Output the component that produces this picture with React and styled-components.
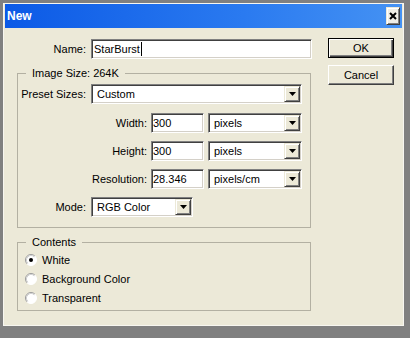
import React from 'react';
import styled, { createGlobalStyle, css } from 'styled-components';

const Global = createGlobalStyle`
  html, body { margin: 0; padding: 0; background: #808080; }
  body {
    width: 410px; height: 338px; overflow: hidden;
    font-family: "Liberation Sans", Arial, sans-serif;
    font-size: 11px; color: #000;
  }
  * { box-sizing: border-box; }
`;

const sunken = css`
  background: #fff;
  border: 1px solid;
  border-color: #808080 #fff #fff #808080;
  box-shadow: inset 1px 1px #404040, inset -1px -1px #d4d0c8;
`;

const raised = css`
  background: #ece9d8;
  border: 1px solid;
  border-color: #ece9d8 #404040 #404040 #ece9d8;
  box-shadow: inset 1px 1px #fff, inset -1px -1px #808080;
`;

const Desktop = styled.div`
  width: 410px;
  height: 338px;
  padding: 3px 0 0 3px;
  background: #808080;
`;

const Window = styled.div`
  width: 401px;
  height: 323px;
  background: #ece9d8;
  border: 1px solid #f7f6f0;
  padding: 0 1px 1px 1px;
  display: flex;
  flex-direction: column;
`;

const TitleBar = styled.div`
  height: 24px;
  flex: none;
  display: flex;
  align-items: center;
  justify-content: space-between;
  padding: 0 2px 0 2px;
  background: linear-gradient(to right, #0c5ae6 0%, #2a7af0 60%, #4592f3 100%);
`;

const Title = styled.span`
  color: #fff;
  font-weight: bold;
  font-size: 12px;
  letter-spacing: 0;
`;

const CloseButton = styled.div`
  ${raised};
  background: #f1efe6;
  width: 14px;
  height: 18px;
  display: flex;
  align-items: center;
  justify-content: center;
`;

const Body = styled.div`
  flex: 1;
  display: flex;
  gap: 16px;
  padding: 10px 8px 0 12px;
`;

const LeftCol = styled.div`
  width: 295px;
  padding-top: 1px;
  display: flex;
  flex-direction: column;
`;

const ButtonCol = styled.div`
  width: 66px;
  display: flex;
  flex-direction: column;
  gap: 7px;
`;

const PushButton = styled.div`
  width: 66px;
  height: 20px;
  display: flex;
  align-items: center;
  justify-content: center;
  background: #ece9d8;
  border: 1px solid;
  ${p => p.$default ? css`
    border-color: #000;
    box-shadow: inset 1px 1px #fff, inset -1px -1px #404040, inset -2px -2px #808080;
  ` : css`
    border-color: #fff #404040 #404040 #fff;
    box-shadow: inset -1px -1px #808080;
  `}
`;

const Row = styled.div`
  display: flex;
  align-items: center;
  height: 20px;
  gap: ${p => p.$gap ?? 5}px;
  margin-top: ${p => p.$mt ?? 0}px;
`;

const Label = styled.span`
  width: ${p => p.$w}px;
  text-align: right;
  white-space: nowrap;
`;

const TextBox = styled.div`
  ${sunken};
  width: ${p => p.$w}px;
  height: 20px;
  display: flex;
  align-items: center;
  padding-left: ${p => p.$pl ?? 1}px;
  white-space: nowrap;
`;

const Caret = styled.span`
  display: inline-block;
  width: 1px;
  height: 14px;
  background: #000;
  margin-left: 1px;
`;

const Select = styled.div`
  ${sunken};
  width: ${p => p.$w}px;
  height: 20px;
  display: flex;
  align-items: center;
  padding: 1px;
`;

const SelectText = styled.span`
  flex: 1;
  padding-left: 4px;
  white-space: nowrap;
`;

const ArrowButton = styled.div`
  ${raised};
  width: 16px;
  height: 16px;
  display: flex;
  align-items: center;
  justify-content: center;
`;

const Group = styled.fieldset`
  margin: ${p => p.$mt}px 0 0 0;
  padding: ${p => p.$pt}px 0 ${p => p.$pb}px 0;
  width: 294px;
  min-width: 0;
  border: 1px solid #b3b0a2;
  display: flex;
  flex-direction: column;
`;

const Legend = styled.legend`
  margin-left: 8px;
  padding: 0 6px;
  line-height: 13px;
  font-size: 11px;
`;

const RadioRow = styled.div`
  height: 19px;
  display: flex;
  align-items: center;
  gap: 5px;
  padding-left: 7px;
`;

const Arrow = () => (
  <svg width="7" height="4" viewBox="0 0 7 4">
    <polygon points="0,0 7,0 3.5,4" fill="#000" />
  </svg>
);

const Dropdown = ({ w, children }) => (
  <Select $w={w}>
    <SelectText>{children}</SelectText>
    <ArrowButton><Arrow /></ArrowButton>
  </Select>
);

const Radio = ({ checked }) => (
  <svg width="12" height="12" viewBox="0 0 12 12">
    <circle cx="6" cy="6" r="5.5" fill="#fff" />
    <path d="M2.11 9.89 A5.5 5.5 0 0 1 9.89 2.11" fill="none" stroke="#9a9a9a" strokeWidth="1" />
    <path d="M9.89 2.11 A5.5 5.5 0 0 1 2.11 9.89" fill="none" stroke="#fff" strokeWidth="1" />
    <path d="M2.82 9.18 A4.5 4.5 0 0 1 9.18 2.82" fill="none" stroke="#d0d0d0" strokeWidth="1" />
    {checked && <circle cx="6" cy="6" r="2" fill="#000" />}
  </svg>
);

const UnitRow = ({ label, value, unit, mt }) => (
  <Row $mt={mt} $gap={4}>
    <Label $w={129}>{label}</Label>
    <TextBox $w={53}>{value}</TextBox>
    <Dropdown w={94}>{unit}</Dropdown>
  </Row>
);

export default function App() {
  return (
    <>
      <Global />
      <Desktop>
        <Window>
          <TitleBar>
            <Title>New</Title>
            <CloseButton>
              <svg width="8" height="8" viewBox="0 0 8 8">
                <path d="M1 1 L7 7 M7 1 L1 7" stroke="#000" strokeWidth="2" />
              </svg>
            </CloseButton>
          </TitleBar>
          <Body>
            <LeftCol>
              <Row>
                <Label $w={69}>Name:</Label>
                <TextBox $w={221} $pl={2}>StarBurst<Caret /></TextBox>
              </Row>
              <Group $mt={8} $pt={4} $pb={10}>
                <Legend>Image Size: 264K</Legend>
                <Row>
                  <Label $w={68}>Preset Sizes:</Label>
                  <Dropdown w={211}>Custom</Dropdown>
                </Row>
                <UnitRow label="Width:" value="300" unit="pixels" mt={9} />
                <UnitRow label="Height:" value="300" unit="pixels" mt={8} />
                <UnitRow label="Resolution:" value="28.346" unit="pixels/cm" mt={8} />
                <Row $mt={8}>
                  <Label $w={68}>Mode:</Label>
                  <Dropdown w={102}>RGB Color</Dropdown>
                </Row>
              </Group>
              <Group $mt={8} $pt={1} $pb={3}>
                <Legend>Contents</Legend>
                <RadioRow><Radio checked />White</RadioRow>
                <RadioRow><Radio />Background Color</RadioRow>
                <RadioRow><Radio />Transparent</RadioRow>
              </Group>
            </LeftCol>
            <ButtonCol>
              <PushButton $default>OK</PushButton>
              <PushButton>Cancel</PushButton>
            </ButtonCol>
          </Body>
        </Window>
      </Desktop>
    </>
  );
}
